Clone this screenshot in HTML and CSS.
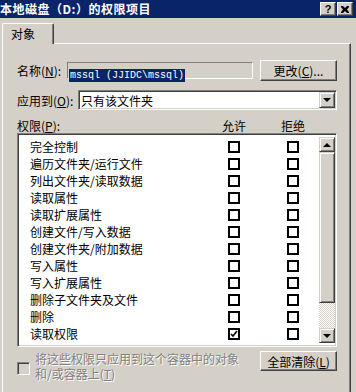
FILE: index.html
```html
<!DOCTYPE html>
<html>
<head>
  <meta charset="UTF-8">
  <link rel="stylesheet" href="styles.css">
</head>
<body>
  <!-- Заголовок окна -->
  <div class="titlebar">
    <span class="title">本地磁盘（D:）的权限项目</span>
    <div class="title-btns">
      <span class="tbtn">?</span>
      <span class="tbtn">
        <svg width="8" height="7" viewBox="0 0 8 7"><path d="M0 0h2l2 2 2-2h2v1l-2 2.5 2 2.5v1h-2l-2-2-2 2h-2v-1l2-2.5-2-2.5z" fill="#000"/></svg>
      </span>
    </div>
  </div>

  <!-- Вкладки -->
  <div class="tabs">
    <div class="tab active">对象</div>
  </div>

  <div class="panel">
    <div class="field-row name-row">
      <span class="lbl name-lbl">名称(<u>N</u>):</span>
      <div class="name-box"><span class="sel">mssql (JJIDC\mssql)</span></div>
      <div class="btn change-btn">更改(<u>C</u>)...</div>
    </div>

    <div class="field-row apply-row">
      <span class="lbl apply-lbl">应用到(<u>O</u>):</span>
      <div class="combo">
        <span class="combo-text">只有该文件夹</span>
        <span class="combo-arrow"><i class="tri-down"></i></span>
      </div>
    </div>

    <div class="perm-head">
      <span class="perm-lbl">权限(<u>P</u>):</span>
      <span class="col-head">允许</span>
      <span class="col-head deny-head">拒绝</span>
    </div>

    <!-- Список прав -->
    <div class="perm-list">
      <div class="perm-rows">
        <div class="perm-row"><span>完全控制</span><i class="cb"></i><i class="cb"></i></div>
        <div class="perm-row"><span>遍历文件夹/运行文件</span><i class="cb"></i><i class="cb"></i></div>
        <div class="perm-row"><span>列出文件夹/读取数据</span><i class="cb"></i><i class="cb"></i></div>
        <div class="perm-row"><span>读取属性</span><i class="cb"></i><i class="cb"></i></div>
        <div class="perm-row"><span>读取扩展属性</span><i class="cb"></i><i class="cb"></i></div>
        <div class="perm-row"><span>创建文件/写入数据</span><i class="cb"></i><i class="cb"></i></div>
        <div class="perm-row"><span>创建文件夹/附加数据</span><i class="cb"></i><i class="cb"></i></div>
        <div class="perm-row"><span>写入属性</span><i class="cb"></i><i class="cb"></i></div>
        <div class="perm-row"><span>写入扩展属性</span><i class="cb"></i><i class="cb"></i></div>
        <div class="perm-row"><span>删除子文件夹及文件</span><i class="cb"></i><i class="cb"></i></div>
        <div class="perm-row"><span>删除</span><i class="cb"></i><i class="cb"></i></div>
        <div class="perm-row">
          <span>读取权限</span>
          <i class="cb checked"><svg width="8" height="8" viewBox="0 0 8 8"><path d="M1 4l2 2 4-5" fill="none" stroke="#000" stroke-width="1.6"/></svg></i>
          <i class="cb"></i>
        </div>
      </div>
      <div class="scrollbar">
        <div class="sb-btn"><i class="tri-up"></i></div>
        <div class="sb-thumb"></div>
        <div class="sb-track"></div>
        <div class="sb-btn"><i class="tri-down"></i></div>
      </div>
    </div>

    <div class="bottom-row">
      <i class="cb-disabled"></i>
      <div class="disabled-text">
        <div class="dline">将这些权限只应用到这个容器中的对象</div>
        <div class="dline">和/或容器上(<u>T</u>)</div>
      </div>
      <div class="btn clear-btn">全部清除(<u>L</u>)</div>
    </div>
  </div>
</body>
</html>
```

FILE: styles.css
```css
* {
  box-sizing: border-box;
}
body {
  margin: 0;
  width: 356px;
  height: 392px;
  overflow: hidden;
  background-color: #d4d0c8;
  font-family: "Noto Sans CJK SC", "Liberation Sans", sans-serif;
  font-size: 12px;
  color: #000;
}
u {
  text-decoration: underline;
}
/* Заголовок */
.titlebar {
  display: flex;
  align-items: center;
  justify-content: space-between;
  height: 18px;
  background-color: #0a246a;
  color: #fff;
}
.title {
  font-weight: bold;
  line-height: 18px;
  letter-spacing: 0.5px;
  white-space: nowrap;
}
.title-btns {
  display: flex;
  gap: 1px;
  margin-right: 3px;
}
.tbtn {
  display: flex;
  align-items: center;
  justify-content: center;
  width: 16px;
  height: 14px;
  background-color: #d4d0c8;
  border-top: 1px solid #fff;
  border-left: 1px solid #fff;
  border-right: 1px solid #404040;
  border-bottom: 1px solid #404040;
  box-shadow: inset -1px -1px #808080;
  color: #000;
  font-family: "Liberation Sans", sans-serif;
  font-size: 11px;
  font-weight: bold;
}
/* Вкладки */
.tabs {
  display: flex;
  height: 26px;
  padding: 5px 0 0 2px;
}
.tab {
  position: relative;
  z-index: 1;
  width: 52px;
  height: 21px;
  padding: 2px 0 0 8px;
  line-height: 16px;
  background-color: #d4d0c8;
  border-top: 1px solid #fff;
  border-left: 1px solid #fff;
  border-right: 1px solid #404040;
  border-radius: 2px 2px 0 0;
  box-shadow: inset -1px 0 #808080;
}
.panel {
  height: 360px;
  margin: -1px 5px 0 2px;
  padding: 16px 13px 0 14px;
  border-top: 1px solid #fff;
  border-left: 1px solid #fff;
  border-right: 1px solid #404040;
  box-shadow: inset -1px 0 #808080;
}
/* Поля */
.field-row {
  display: flex;
  align-items: center;
}
.name-row {
  height: 21px;
}
.name-lbl {
  width: 50px;
}
.apply-row {
  height: 20px;
  margin-top: 9px;
}
.apply-lbl {
  width: 61px;
}
.lbl {
  white-space: nowrap;
}
.name-box {
  width: 186px;
  height: 17px;
  padding: 1px 0 0 1px;
  border-top: 1px solid #808080;
  border-left: 1px solid #808080;
  border-right: 1px solid #fff;
  border-bottom: 1px solid #fff;
}
.sel {
  display: inline-block;
  padding: 0 1px;
  height: 13px;
  line-height: 13px;
  background-color: #0a246a;
  color: #fff;
  font-family: "Liberation Mono", monospace;
  font-size: 10px;
  white-space: pre;
}
.btn {
  display: flex;
  align-items: center;
  justify-content: center;
  background-color: #d4d0c8;
  border-top: 1px solid #fff;
  border-left: 1px solid #fff;
  border-right: 1px solid #404040;
  border-bottom: 1px solid #404040;
  box-shadow: inset -1px -1px #808080;
  white-space: nowrap;
}
.change-btn {
  width: 77px;
  height: 21px;
  margin-left: auto;
}
.combo {
  display: flex;
  align-items: center;
  width: 259px;
  height: 20px;
  background-color: #fff;
  border-top: 1px solid #808080;
  border-left: 1px solid #808080;
  border-right: 1px solid #fff;
  border-bottom: 1px solid #fff;
  box-shadow: inset 1px 1px #404040, inset -1px -1px #d4d0c8;
}
.combo-text {
  flex: 1;
  padding-left: 2px;
}
.combo-arrow {
  display: flex;
  align-items: center;
  justify-content: center;
  width: 16px;
  height: 16px;
  margin-right: 1px;
  background-color: #d4d0c8;
  border-top: 1px solid #d4d0c8;
  border-left: 1px solid #d4d0c8;
  border-right: 1px solid #404040;
  border-bottom: 1px solid #404040;
  box-shadow: inset 1px 1px #fff, inset -1px -1px #808080;
}
.tri-down, .tri-up {
  display: block;
  width: 0;
  height: 0;
  border-left: 4px solid transparent;
  border-right: 4px solid transparent;
}
.tri-down {
  border-top: 4px solid #000;
}
.tri-up {
  border-bottom: 4px solid #000;
}
/* Заголовок списка */
.perm-head {
  display: flex;
  height: 14px;
  margin-top: 9px;
  padding-right: 24px;
  line-height: 14px;
}
.perm-lbl {
  flex: 1;
}
.col-head {
  width: 40px;
  text-align: center;
}
.deny-head {
  margin-left: 19px;
}
/* Список прав */
.perm-list {
  display: flex;
  height: 214px;
  padding: 1px;
  background-color: #fff;
  border-top: 1px solid #808080;
  border-left: 1px solid #808080;
  border-right: 1px solid #fff;
  border-bottom: 1px solid #fff;
  box-shadow: inset 1px 1px #404040, inset -1px -1px #d4d0c8;
}
.perm-rows {
  flex: 1;
  padding-top: 3px;
}
.perm-row {
  display: grid;
  grid-template-columns: 1fr 12px 12px;
  column-gap: 47px;
  align-items: center;
  height: 17px;
  padding: 0 20px 0 11px;
  white-space: nowrap;
}
.cb {
  display: flex;
  align-items: center;
  justify-content: center;
  width: 12px;
  height: 12px;
  border: 2px solid #000;
  background-color: #fff;
}
.scrollbar {
  display: flex;
  flex-direction: column;
  width: 16px;
  padding: 2px 0;
}
.sb-btn {
  display: flex;
  align-items: center;
  justify-content: center;
  height: 15px;
  background-color: #d4d0c8;
  border-top: 1px solid #d4d0c8;
  border-left: 1px solid #d4d0c8;
  border-right: 1px solid #404040;
  border-bottom: 1px solid #404040;
  box-shadow: inset 1px 1px #fff, inset -1px -1px #808080;
}
.sb-thumb {
  height: 151px;
  background-color: #d4d0c8;
  border-top: 1px solid #d4d0c8;
  border-left: 1px solid #d4d0c8;
  border-right: 1px solid #404040;
  border-bottom: 1px solid #404040;
  box-shadow: inset 1px 1px #fff, inset -1px -1px #808080;
}
.sb-track {
  flex: 1;
  background: repeating-conic-gradient(#fff 0 25%, #d4d0c8 0 50%) 0 0 / 2px 2px;
}
/* Нижняя строка */
.bottom-row {
  display: flex;
  align-items: flex-start;
  margin-top: 4px;
}
.cb-disabled {
  flex: none;
  width: 13px;
  height: 13px;
  margin-top: 11px;
  background-color: #d4d0c8;
  border-top: 1px solid #808080;
  border-left: 1px solid #808080;
  border-right: 1px solid #fff;
  border-bottom: 1px solid #fff;
  box-shadow: inset 1px 1px #404040, inset -1px -1px #d4d0c8;
}
.disabled-text {
  margin-left: 5px;
  color: #808080;
  text-shadow: 1px 1px 0 #fff;
  white-space: nowrap;
}
.dline {
  height: 15px;
  line-height: 15px;
}
.clear-btn {
  width: 77px;
  height: 20px;
  margin-left: auto;
}
```
